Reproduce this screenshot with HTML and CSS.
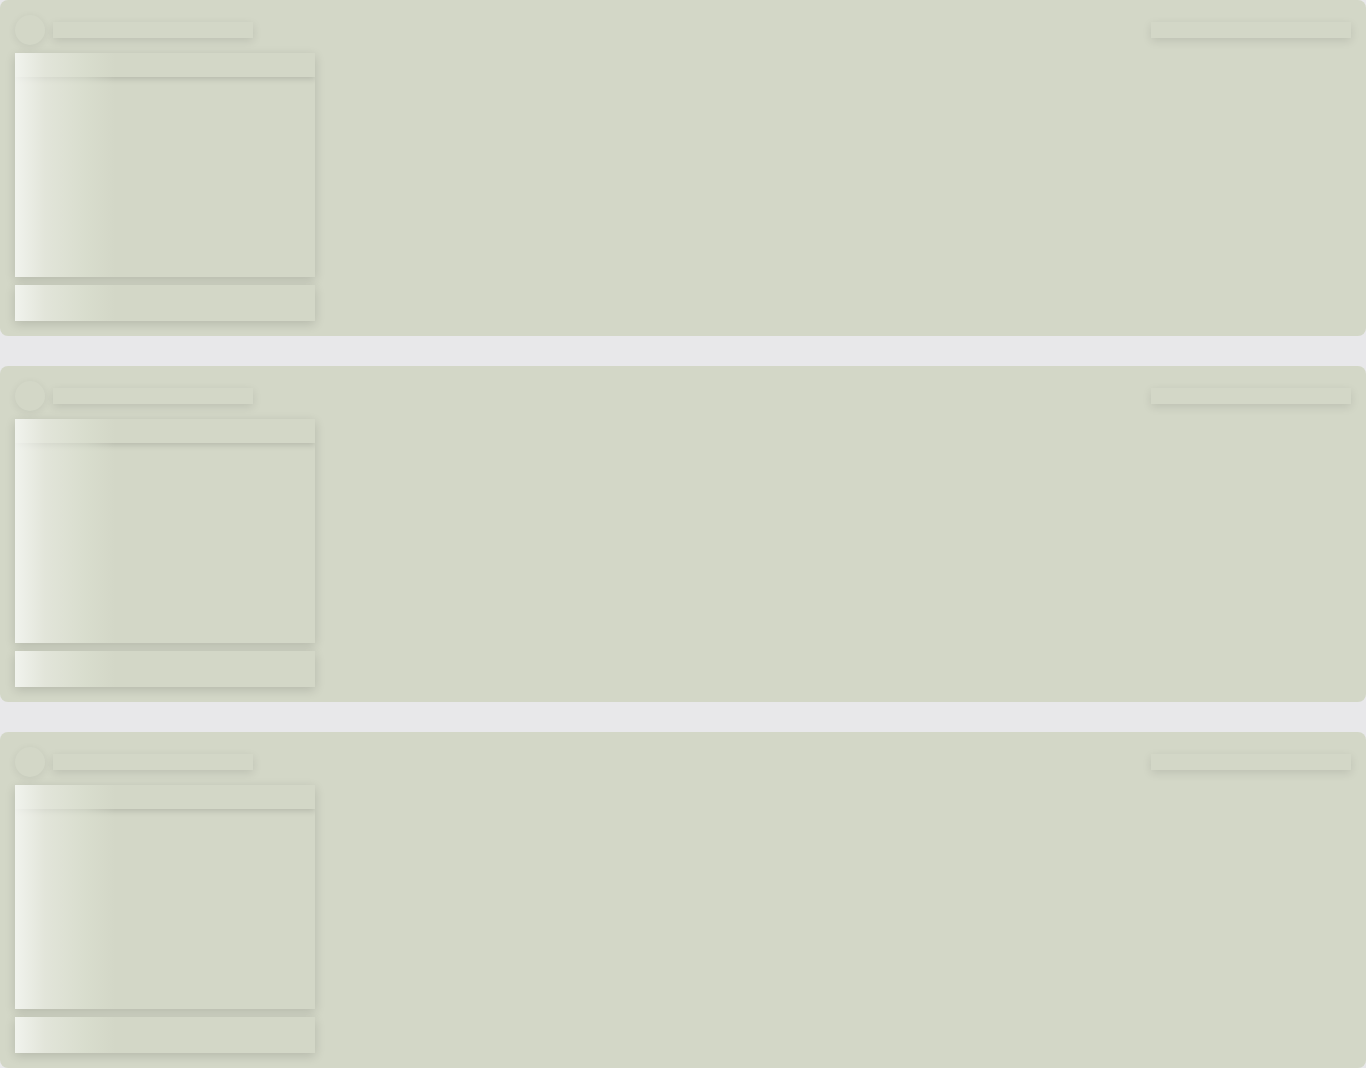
FILE: index.html
```html
<!DOCTYPE html>
<html lang="en">
<head>
<meta charset="utf-8">
<title>Loading</title>
<link rel="stylesheet" href="styles.css">
</head>
<body>
<main class="feed">
  <section class="card">
    <div class="card-head">
      <div class="avatar"></div>
      <div class="line title"></div>
      <div class="line meta"></div>
    </div>
    <div class="panel shimmer"><div class="panel-head"></div></div>
    <div class="footer shimmer"></div>
  </section>
  <section class="card">
    <div class="card-head">
      <div class="avatar"></div>
      <div class="line title"></div>
      <div class="line meta"></div>
    </div>
    <div class="panel shimmer"><div class="panel-head"></div></div>
    <div class="footer shimmer"></div>
  </section>
  <section class="card">
    <div class="card-head">
      <div class="avatar"></div>
      <div class="line title"></div>
      <div class="line meta"></div>
    </div>
    <div class="panel shimmer"><div class="panel-head"></div></div>
    <div class="footer shimmer"></div>
  </section>
</main>
</body>
</html>
```

FILE: styles.css
```css
html, body {
  margin: 0;
  padding: 0;
  background: #e8e8ea;
  font-family: "Liberation Sans", Arial, sans-serif;
}

.feed {
  display: flex;
  flex-direction: column;
  gap: 30px;
}

.card {
  background: #d3d7c7;
  border-radius: 8px;
  height: 336px;
  box-sizing: border-box;
  padding: 15px;
  display: flex;
  flex-direction: column;
}

.card-head {
  display: flex;
  align-items: center;
  height: 30px;
  margin-bottom: 8px;
}

.avatar {
  width: 30px;
  height: 30px;
  border-radius: 50%;
  background: #d3d7c7;
  box-shadow: 0 2px 8px rgba(0, 0, 0, 0.07);
  flex: none;
}

.line {
  height: 16px;
  width: 200px;
  background: #d3d7c7;
  box-shadow: 0 3px 10px rgba(0, 0, 0, 0.1);
}

.title {
  margin-left: 8px;
}

.meta {
  margin-left: auto;
}

.panel {
  width: 300px;
  height: 224px;
  background: #d3d7c7;
  box-shadow: 0 3px 10px rgba(0, 0, 0, 0.14);
  position: relative;
  overflow: hidden;
}

.panel-head {
  height: 24px;
  background: #d3d7c7;
  box-shadow: 0 2px 6px rgba(0, 0, 0, 0.14);
}

.footer {
  width: 300px;
  height: 36px;
  margin-top: 8px;
  background: #d3d7c7;
  box-shadow: 0 3px 10px rgba(0, 0, 0, 0.14);
  position: relative;
  overflow: hidden;
}

.shimmer::after {
  content: "";
  position: absolute;
  inset: 0;
  background: linear-gradient(to right,
    rgba(246, 248, 244, 0.85) 0px,
    rgba(236, 238, 230, 0.6) 30px,
    rgba(222, 227, 212, 0.5) 70px,
    rgba(211, 215, 199, 0) 100px);
  pointer-events: none;
}
```
